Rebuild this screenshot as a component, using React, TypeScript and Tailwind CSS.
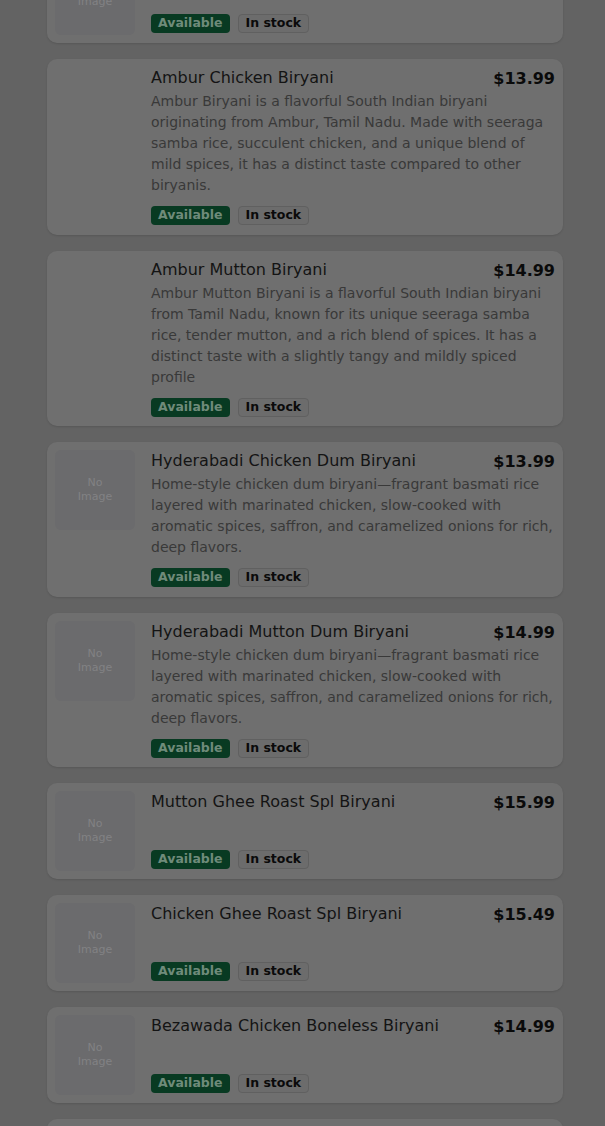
import React from "react";

type Item = {
  name: string;
  price: string;
  desc?: string;
  image: "none" | "blank";
};

const HOME =
  "Home-style chicken dum biryani\u2014fragrant basmati rice layered with marinated chicken, slow-cooked with aromatic spices, saffron, and caramelized onions for rich, deep flavors.";

const items: Item[] = [
  {
    name: "Ambur Chicken Biryani",
    price: "$13.99",
    image: "blank",
    desc: "Ambur Biryani is a flavorful South Indian biryani originating from Ambur, Tamil Nadu. Made with seeraga samba rice, succulent chicken, and a unique blend of mild spices, it has a distinct taste compared to other biryanis.",
  },
  {
    name: "Ambur Mutton Biryani",
    price: "$14.99",
    image: "blank",
    desc: "Ambur Mutton Biryani is a flavorful South Indian biryani from Tamil Nadu, known for its unique seeraga samba rice, tender mutton, and a rich blend of spices. It has a distinct taste with a slightly tangy and mildly spiced profile",
  },
  { name: "Hyderabadi Chicken Dum Biryani", price: "$13.99", image: "none", desc: HOME },
  { name: "Hyderabadi Mutton Dum Biryani", price: "$14.99", image: "none", desc: HOME },
  { name: "Mutton Ghee Roast Spl Biryani", price: "$15.99", image: "none" },
  { name: "Chicken Ghee Roast Spl Biryani", price: "$15.49", image: "none" },
  { name: "Bezawada Chicken Boneless Biryani", price: "$14.99", image: "none" },
  { name: "Chicken 65 Biryani", price: "$14.99", image: "none" },
];

function Placeholder({ kind }: { kind: "none" | "blank" }) {
  if (kind === "blank") return <div className="w-20 h-20 shrink-0 rounded-md" />;
  return (
    <div className="w-20 h-20 shrink-0 rounded-md bg-[#6b6b6d] flex items-center justify-center text-center text-[11px] leading-[14px] text-[#828284]">
      No
      <br />
      Image
    </div>
  );
}

function Badges({ extra }: { extra: string }) {
  return (
    <div className={`flex items-center gap-2 ${extra}`}>
      <span className="rounded-[4px] bg-[#083a22] px-[7px] h-[19px] flex items-center text-[12.5px] font-bold text-[#6f8b7a]">
        Available
      </span>
      <span className="rounded-[4px] bg-[#6c6c6c] border border-[#606060] px-[7px] h-[19px] flex items-center text-[12.5px] font-bold text-[#0a0a0a]">
        In stock
      </span>
    </div>
  );
}

function Card({ item }: { item: Item }) {
  return (
    <div className="flex gap-4 rounded-[10px] bg-[#6f6f6f] p-2 shadow-[0_1px_2px_rgba(0,0,0,0.12)]">
      <Placeholder kind={item.image} />
      <div className="flex flex-1 flex-col min-h-20 min-w-0">
        <div className="flex items-start justify-between gap-3">
          <div className="text-[16px] leading-[21px] text-[#141414]">{item.name}</div>
          <div className="text-[16px] leading-[21px] pt-[1px] font-bold text-[#0a0a0a] shrink-0">{item.price}</div>
        </div>
        {item.desc ? (
          <>
            <p className="mt-[2px] text-[14px] leading-[21px] text-[#393939]">{item.desc}</p>
            <Badges extra="mt-[10px] mb-[1.5px]" />
          </>
        ) : (
          <Badges extra="mt-auto mb-[2.5px]" />
        )}
      </div>
    </div>
  );
}

export default function App() {
  return (
    <div
      className="bg-[#636363] overflow-hidden h-[1126px]"
      style={{ fontFamily: '"DejaVu Sans", sans-serif' }}
    >
      <div className="ml-[47px] w-[516px] -mt-[53px] flex flex-col gap-4">
        <Card item={{ name: "", price: "", image: "none" }} />
        {items.map((it) => (
          <Card key={it.name} item={it} />
        ))}
      </div>
    </div>
  );
}
